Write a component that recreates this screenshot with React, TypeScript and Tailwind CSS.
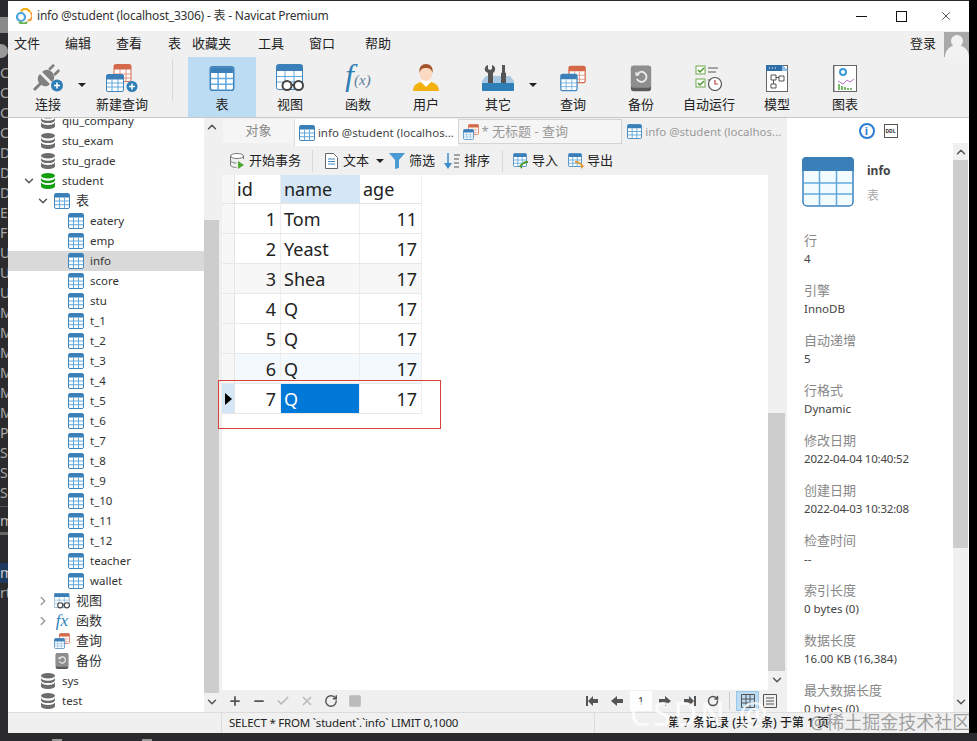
import { ChevronDown, ChevronRight, ChevronUp, Minus, Plus, X, Check, RotateCw, Square } from 'lucide-react';

// Small table glyph used all over the tree and tabs
function TableIcon({ className = 'w-4 h-4' }: { className?: string }) {
  return (
    <svg className={`${className} shrink-0`} viewBox="0 0 16 16">
      <rect x="0.5" y="0.5" width="15" height="15" rx="1.5" fill="#fff" stroke="#3f84bd" />
      <path d="M1 1.5A1 1 0 012 .8h12a1 1 0 011 .7V4.5H1z" fill="#3b7fb8" />
      <path d="M5.5 4.5V15.5M10.5 4.5V15.5M1 8h14M1 11.7h14" stroke="#62a9dd" strokeWidth="1" />
    </svg>
  );
}

function DbIcon({ color = '#6d6d6d', className = 'w-[14px] h-4' }: { color?: string; className?: string }) {
  return (
    <svg className={`${className} shrink-0`} viewBox="0 0 14 16">
      <ellipse cx="7" cy="2.8" rx="7" ry="2.8" fill={color} />
      <path d="M0 5c1 2 3 2.7 7 2.7S13 7 14 5v2.4c-1 2-3 2.7-7 2.7S1 9.400 0 7.400z" fill={color} />
      <path d="M0 9.300c1 2 3 2.700 7 2.700s6-.7 7-2.700V13c0 1.800-3 3-7 3s-7-1.200-7-3z" fill={color} />
    </svg>
  );
}

function QueryIcon({ className = 'w-4 h-4' }: { className?: string }) {
  return (
    <svg className={`${className} shrink-0`} viewBox="0 0 32 32">
      <rect x="11" y="1" width="20" height="20" rx="2" fill="#fff" stroke="#d4694a" strokeWidth="1.500" />
      <path d="M11 2.500A2 2 0 0113 1h16a2 2 0 012 1.500V7H11z" fill="#d4694a" />
      <path d="M18 7v14M24 7v14M11 12h20M11 17h20" stroke="#e3917a" />
      <rect x="1" y="11" width="20" height="20" rx="2" fill="#fff" stroke="#3f84bd" strokeWidth="1.500" />
      <path d="M1 12.500A2 2 0 013 11h16a2 2 0 012 1.500V17H1z" fill="#3b7fb8" />
      <path d="M7.500 17v14M14.500 17v14M1 21.500h20M1 26h20" stroke="#62a9dd" />
    </svg>
  );
}

function BackupIcon({ className = 'w-4 h-4' }: { className?: string }) {
  return (
    <svg className={`${className} shrink-0`} viewBox="0 0 24 28">
      <rect x="1" y="0" width="22" height="28" rx="3" fill="#5c5c5c" />
      <rect x="1" y="0" width="22" height="24" rx="3" fill="#8e8e8e" />
      <path d="M8 9a5.500 5.500 0 11-.5 5.500" fill="none" stroke="#eee" strokeWidth="2" />
      <path d="M5.500 6.500l1 5 4.500-1.500z" fill="#eee" />
    </svg>
  );
}

function ViewIcon({ className = 'w-4 h-4' }: { className?: string }) {
  return (
    <svg className={`${className} shrink-0`} viewBox="0 0 28 28">
      <rect x="0.500" y="0.500" width="26" height="25" rx="2" fill="#fff" stroke="#3f84bd" />
      <path d="M.5 2.500a2 2 0 012-2h22a2 2 0 012 2V7H.5z" fill="#3b7fb8" />
      <path d="M9 7v19M18 7v19M1 12.500h25M1 18h25" stroke="#62a9dd" />
      <circle cx="11" cy="21.500" r="4.500" fill="#fff" stroke="#444" strokeWidth="2" />
      <circle cx="22.500" cy="21.500" r="4.500" fill="#fff" stroke="#444" strokeWidth="2" />
      <path d="M15 21h4" stroke="#444" strokeWidth="2" />
    </svg>
  );
}

function PlugIcon() {
  return (
    <svg className="w-[32px] h-[28px]" viewBox="0 0 32 28">
      <g transform="rotate(45 14 14)" fill="#808080">
        <rect x="12.500" y="21" width="3" height="10" />
        <path d="M7 15.500h14v1a7 6 0 01-14 0z" />
        <path d="M7 12.500h14v-1a7 6 0 00-14 0z" />
        <rect x="9" y="-1" width="2.600" height="7" />
        <rect x="16.400" y="-1" width="2.600" height="7" />
      </g>
      <circle cx="25" cy="21.500" r="6" fill="#2f7fb7" />
      <path d="M25 18.500v6M22 21.500h6" stroke="#fff" strokeWidth="1.600" />
    </svg>
  );
}

function NewQueryIcon() {
  return (
    <svg className="w-[32px] h-[28px]" viewBox="0 0 32 28">
      <rect x="8" y="0.500" width="17" height="17" rx="1.500" fill="#fff" stroke="#d4694a" />
      <path d="M8 2a1.500 1.500 0 011.500-1.500h14A1.500 1.500 0 0125 2v3.500H8z" fill="#d4694a" />
      <path d="M14 5v13M20 5v13M8 10h17M8 14h17" stroke="#e3917a" />
      <rect x="0.500" y="10.500" width="17" height="17" rx="1.500" fill="#fff" stroke="#3f84bd" />
      <path d="M.5 12a1.500 1.500 0 011.500-1.500h14a1.500 1.500 0 011.500 1.500v3.500H.5z" fill="#3b7fb8" />
      <path d="M6 15v12M12 15v12M1 19h16M1 23h16" stroke="#62a9dd" />
      <circle cx="26" cy="22.500" r="5.500" fill="#2f7fb7" />
      <path d="M26 19.500v6M23 22.500h6" stroke="#fff" strokeWidth="1.600" />
    </svg>
  );
}

function FxIcon() {
  return (
    <svg className="w-[30px] h-[28px]" viewBox="0 0 30 28">
      <text x="2" y="22" fontFamily="Liberation Serif" fontStyle="italic" fontSize="32" fill="#2f7fb7">f</text>
      <text x="11" y="21" fontFamily="Liberation Serif" fontStyle="italic" fontSize="15" fill="#5a7d9c">(x)</text>
    </svg>
  );
}

function UserIcon() {
  return (
    <svg className="w-[26px] h-[28px]" viewBox="0 0 26 28">
      <path d="M0 27c0-6 4-8 8-9l5 2 5-2c4 1 8 3 8 9z" fill="#f2b111" />
      <path d="M8 18l5 5 5-5-2-3h-6z" fill="#fff" />
      <ellipse cx="13" cy="9" rx="6.500" ry="8" fill="#fbd9c0" />
      <path d="M6.500 9C5.500 3 9 0 13 0s7.500 3 6.500 9c-1-4-3-5-6.500-5S7.500 5 6.500 9z" fill="#a5532a" />
    </svg>
  );
}

function ToolsIcon() {
  return (
    <svg className="w-[32px] h-[28px]" viewBox="0 0 32 28">
      <path d="M6 1v4l2 1 2-1V1c3 1 4 4 2.500 6.500L11 9v9H6V9L3.500 7.500C2 5 3 2 6 1z" fill="#555" />
      <path d="M20 1h3v7l1 2v8h-5v-8l1-2z" fill="#555" />
      <path d="M0 17l4-5h24l4 5v9a1 1 0 01-1 1H1a1 1 0 01-1-1z" fill="#a8c8e4" />
      <path d="M0 19h32v7a1 1 0 01-1 1H1a1 1 0 01-1-1z" fill="#2f7fb7" />
      <path d="M6 9h5v10H6zM19 9h5v10h-5z" fill="#555" />
    </svg>
  );
}

function AutoRunIcon() {
  return (
    <svg className="w-[28px] h-[26px]" viewBox="0 0 28 26">
      <rect x="1" y="1" width="9" height="8" fill="#fff" stroke="#71a84d" />
      <path d="M3 5l2 2 4-4" fill="none" stroke="#4e9a2e" strokeWidth="1.500" />
      <rect x="1" y="14" width="9" height="8" fill="#fff" stroke="#71a84d" />
      <path d="M3 18l2 2 4-4" fill="none" stroke="#4e9a2e" strokeWidth="1.500" />
      <path d="M13 3h10M13 7h8M13 15h3" stroke="#8a8a8a" strokeWidth="1.500" />
      <circle cx="20" cy="19" r="6.500" fill="#fff" stroke="#555" strokeWidth="1.200" />
      <path d="M20 15v4h3" fill="none" stroke="#c0453c" strokeWidth="1.200" />
    </svg>
  );
}

function ModelIcon() {
  return (
    <svg className="w-[22px] h-[27px]" viewBox="0 0 22 27">
      <rect x="0.500" y="0.500" width="21" height="26" fill="#fff" stroke="#666" />
      <path d="M0 0h16l6 6H0z" fill="#2f6ea6" />
      <path d="M16 0l6 6h-6z" fill="#8fc0e6" />
      <path d="M3 3h1M6 3h1M9 3h1" stroke="#fff" />
      <path d="M5 10h5v5H5zM13 11h5v5h-5zM5 19h5v4H5z" fill="none" stroke="#555" />
      <path d="M10 12.500h3M7.500 15v4" stroke="#555" />
    </svg>
  );
}

function ChartIcon() {
  return (
    <svg className="w-[24px] h-[27px]" viewBox="0 0 24 27">
      <rect x="0.500" y="0.500" width="23" height="26" fill="#fff" stroke="#666" />
      <path d="M1.500 1v25" stroke="#bbb" />
      <circle cx="10" cy="7" r="3" fill="none" stroke="#3a9ad9" strokeWidth="2" />
      <path d="M5 16l5 3 4-4 3 2 4-3" fill="none" stroke="#b971c9" />
      <path d="M6 25v-6M9 25v-4M12 25v-3M15 25v-2M18 25v-2" stroke="#4fa53a" strokeWidth="1.500" />
    </svg>
  );
}

function Caret() {
  return <div className="w-0 h-0 border-x-[4px] border-x-transparent border-t-[4px] border-t-[#222]" />;
}

const cjk = "font-['Noto_Sans','Noto_Sans_CJK_SC',sans-serif]";

const menus = [
  { t: '文件', c: 'ml-0' },
  { t: '编辑', c: 'ml-[25px]' },
  { t: '查看', c: 'ml-[25px]' },
  { t: '表', c: 'ml-[26px]' },
  { t: '收藏夹', c: 'ml-[11px]' },
  { t: '工具', c: 'ml-[27px]' },
  { t: '窗口', c: 'ml-[25px]' },
  { t: '帮助', c: 'ml-[30px]' },
];

function ToolItem({ label, active, w = 'w-[68px]', children }: { label: string; active?: boolean; w?: string; children: React.ReactNode }) {
  return (
    <div className={`${w} h-full flex flex-col items-center shrink-0 ${active ? 'bg-[#bcdcf4]' : ''}`}>
      <div className="h-[28px] mt-[7px] flex items-center justify-center">{children}</div>
      <div className="mt-[3px] text-[13px] leading-[18px] text-[#222]">{label}</div>
    </div>
  );
}

const tables = ['eatery', 'emp', 'info', 'score', 'stu', 't_1', 't_2', 't_3', 't_4', 't_5', 't_6', 't_7', 't_8', 't_9', 't_10', 't_11', 't_12', 'teacher', 'wallet'];

function DbRow({ name, color, open }: { name: string; color?: string; open?: boolean }) {
  return (
    <div className="h-5 flex items-center pl-[33px] text-[11.5px] text-[#333] relative">
      {open && <ChevronDown className="w-[14px] h-[14px] absolute left-[14px] text-[#555]" strokeWidth={2.500} />}
      <DbIcon color={color} />
      <span className="ml-[7px]">{name}</span>
    </div>
  );
}

function GroupRow({ name, chevron, children }: { name: string; chevron?: 'open' | 'closed'; children: React.ReactNode }) {
  return (
    <div className="h-5 flex items-center pl-[46px] text-xs text-[#333] relative">
      {chevron === 'open' && <ChevronDown className="w-[14px] h-[14px] absolute left-[28px] text-[#555]" strokeWidth={2.500} />}
      {chevron === 'closed' && <ChevronRight className="w-[14px] h-[14px] absolute left-[28px] text-[#999]" strokeWidth={2.500} />}
      <div className="w-4 h-4 flex items-center justify-center">{children}</div>
      <span className="ml-[6px] text-[13px]">{name}</span>
    </div>
  );
}

function Tree() {
  return (
    <div className="w-[196px] shrink-0 bg-white overflow-hidden">
      <div className="-mt-[7px]">
        <DbRow name="qiu_company" />
        <DbRow name="stu_exam" />
        <DbRow name="stu_grade" />
        <DbRow name="student" color="#12a012" open />
        <GroupRow name="表" chevron="open"><TableIcon /></GroupRow>
        {tables.map((t) => (
          <div key={t} className={`h-5 flex items-center pl-[60px] text-[11.5px] text-[#333] ${t === 'info' ? 'bg-[#d9d9d9]' : ''}`}>
            <TableIcon />
            <span className="ml-[6px]">{t}</span>
          </div>
        ))}
        <GroupRow name="视图" chevron="closed"><ViewIcon /></GroupRow>
        <GroupRow name="函数" chevron="closed">
          <span className="font-['Liberation_Serif',serif] italic text-[17px] leading-4 text-[#2f7fb7]">fx</span>
        </GroupRow>
        <GroupRow name="查询"><QueryIcon /></GroupRow>
        <GroupRow name="备份"><BackupIcon className="w-[14px] h-4" /></GroupRow>
        <DbRow name="sys" />
        <DbRow name="test" />
      </div>
    </div>
  );
}

function ScrollBar({ topGap, thumb, className }: { topGap: string; thumb: string; className: string }) {
  return (
    <div className={`flex flex-col items-center bg-[#f0f0f0] shrink-0 ${className}`}>
      <div className={`${topGap} w-full flex items-center justify-center`}>
        <ChevronUp className="w-[14px] h-[14px] text-[#555]" strokeWidth={2.500} />
      </div>
      <div className={`${thumb} w-full bg-[#cdcdcd]`} />
      <div className="flex-1" />
      <ChevronDown className="w-[14px] h-[14px] text-[#555] mb-[3px]" strokeWidth={2.500} />
    </div>
  );
}

const rows = [
  { id: 1, name: 'Tom', age: 11, bg: 'bg-white' },
  { id: 2, name: 'Yeast', age: 17, bg: 'bg-white' },
  { id: 3, name: 'Shea', age: 17, bg: 'bg-[#f7f7f7]' },
  { id: 4, name: 'Q', age: 17, bg: 'bg-white' },
  { id: 5, name: 'Q', age: 17, bg: 'bg-white' },
  { id: 6, name: 'Q', age: 17, bg: 'bg-[#f3f9fd]' },
  { id: 7, name: 'Q', age: 17, bg: 'bg-white' },
];

function DataGrid() {
  return (
    <div className="relative flex-1 bg-white">
      <div className="w-[200px] text-[18px] leading-[30px] text-[#222]">
        <div className="flex h-[29px] leading-[28px] border-b border-[#e4e4e4]">
          <div className="w-[13px] bg-[#f7f7f7] border-r border-[#e4e4e4]" />
          <div className="w-[46px] pl-[2px] border-r border-[#eee]">id</div>
          <div className="w-[79px] pl-[3px] bg-[#d5e7f7]">name</div>
          <div className="w-[62px] pl-[3px] border-r border-[#eee]">age</div>
        </div>
        {rows.map((r) => (
          <div key={r.id} className={`flex h-[30px] border-b border-[#e8e8e8] ${r.bg}`}>
            <div className={`w-[13px] border-r border-[#e4e4e4] flex items-center justify-center ${r.id === 7 ? 'bg-[#d5e7f7]' : 'bg-[#f7f7f7]'}`}>
              {r.id === 7 && <div className="w-0 h-0 border-y-[6px] border-y-transparent border-l-[7px] border-l-black" />}
            </div>
            <div className="w-[46px] pr-[4px] text-right border-r border-[#eee]">{r.id}</div>
            <div className={`w-[79px] pl-[3px] border-r border-[#eee] ${r.id === 7 ? 'bg-[#0078d7] text-white' : ''}`}>{r.name}</div>
            <div className="w-[62px] pr-[4px] text-right border-r border-[#eee]">{r.age}</div>
          </div>
        ))}
      </div>
      <div className="absolute left-[-4px] top-[205px] w-[223px] h-[49px] border border-[#d9413b]" />
    </div>
  );
}

function SmallTool({ label, children, caret }: { label: string; children: React.ReactNode; caret?: boolean }) {
  return (
    <div className="flex items-center shrink-0">
      <div className="w-4 h-4 flex items-center justify-center">{children}</div>
      <span className="ml-[4px] text-[13px] text-[#222]">{label}</span>
      {caret && <div className="ml-[7px]"><Caret /></div>}
    </div>
  );
}

function ArrowBadge({ color, flip }: { color: string; flip?: boolean }) {
  return (
    <div className="relative w-[15px] h-[15px]">
      <TableIcon className="w-[14px] h-[14px]" />
      <svg className="absolute -right-[1px] -bottom-[1px] w-[10px] h-[9px]" viewBox="0 0 10 9">
        <path d={flip ? 'M1 1c4 0 6 1 6 4V3l3 3-3 3V7C7 4 4 3 1 3z' : 'M9 1C5 1 3 2 3 5V3L0 6l3 3V7c0-3 3-4 6-4z'} fill={color} />
      </svg>
    </div>
  );
}

function ObjectToolbar() {
  return (
    <div className="h-[29px] flex items-center shrink-0 pl-[7px]">
      <SmallTool label="开始事务">
        <svg className="w-[15px] h-[16px]" viewBox="0 0 15 16">
          <ellipse cx="7" cy="3" rx="6.500" ry="2.500" fill="#fff" stroke="#777" />
          <path d="M.5 3v9c0 1.400 3 2.500 6 2.500M13.500 3v3M.5 7.500c0 1.400 3 2.500 6 2.500" fill="none" stroke="#777" />
          <path d="M8 8l6 4-6 4z" fill="#4ea72e" />
        </svg>
      </SmallTool>
      <div className="w-px h-[22px] bg-[#d8d8d8] ml-[11px] mr-[10px]" />
      <SmallTool label="文本" caret>
        <svg className="w-[13px] h-[16px]" viewBox="0 0 13 16">
          <path d="M.5.5h8l4 4v11H.5z" fill="#fff" stroke="#666" />
          <path d="M3 6h7M3 8.500h7M3 11h7" stroke="#3f84bd" />
        </svg>
      </SmallTool>
      <div className="w-[5px]" />
      <SmallTool label="筛选">
        <svg className="w-4 h-4" viewBox="0 0 16 16"><path d="M0 0h16L10 7v8l-4 1V7z" fill="#4a9ad4" /></svg>
      </SmallTool>
      <div className="w-[9px]" />
      <SmallTool label="排序">
        <svg className="w-4 h-4" viewBox="0 0 16 16">
          <path d="M4 0v13" stroke="#3d8fd1" strokeWidth="1.500" />
          <path d="M0 10l4 6 4-6z" fill="#3d8fd1" />
          <path d="M10 2h6M10 6h5M10 10h5M10 14h5" stroke="#555" />
        </svg>
      </SmallTool>
      <div className="w-px h-[22px] bg-[#d8d8d8] ml-[12px] mr-[9px]" />
      <SmallTool label="导入"><ArrowBadge color="#4e9a2e" /></SmallTool>
      <div className="w-[9px]" />
      <SmallTool label="导出"><ArrowBadge color="#e8962e" flip /></SmallTool>
    </div>
  );
}

function Tabs() {
  return (
    <div className="h-[28px] flex items-stretch shrink-0 text-[13px] pt-px">
      <div className="w-[71px] mb-[3px] ml-px bg-[#f5f5f5] text-[#888] flex items-center justify-center">对象</div>
      <div className="w-[164px] bg-white flex items-center pl-[4px] text-[#444] border-l border-[#ddd]">
        <TableIcon />
        <span className="ml-[3px] text-[11.5px] whitespace-nowrap">info @student (localhos...</span>
      </div>
      <div className="w-[165px] mb-[2px] bg-[#f5f5f5] border border-[#d4d4d4] flex items-center pl-[4px] text-[#999]">
        <QueryIcon />
        <span className="ml-[3px] whitespace-nowrap">* 无标题 - 查询</span>
      </div>
      <div className="w-[165px] mb-[2px] flex items-center pl-[5px] text-[#999]">
        <TableIcon className="w-[15px] h-[15px]" />
        <span className="ml-[3px] text-[11.5px] whitespace-nowrap">info @student (localhos...</span>
      </div>
    </div>
  );
}

function PagerArrow({ d }: { d: string }) {
  return (
    <svg className="w-3 h-3" viewBox="0 0 12 12"><path d={d} fill="#555" /></svg>
  );
}

function GridFooter() {
  const muted = 'w-[14px] h-[14px] text-[#bbb]';
  return (
    <div className="h-[22px] flex items-center shrink-0 text-[#555]">
      <div className="flex items-center gap-[10px] pl-[6px]">
        <Plus className="w-[14px] h-[14px]" strokeWidth={3} />
        <Minus className="w-[14px] h-[14px]" strokeWidth={3} />
        <Check className={muted} strokeWidth={3} />
        <X className={muted} strokeWidth={3} />
        <RotateCw className="w-[14px] h-[14px]" strokeWidth={2.500} />
        <Square className="w-[14px] h-[14px] text-[#bbb] fill-[#bbb]" />
      </div>
      <div className="flex-1" />
      <div className="flex items-center">
        <PagerArrow d="M0 1h2v10H0zM2 6l5-5v3h5v4H7v3z" />
        <div className="w-[13px]" />
        <PagerArrow d="M0 6l6-5v3h6v4H6v3z" />
        <div className="w-[7px]" />
        <div className="w-[22px] h-[20px] bg-white text-[11px] text-center leading-5 text-[#444]">1</div>
        <div className="w-[7px]" />
        <PagerArrow d="M12 6L6 1v3H0v4h6v3z" />
        <div className="w-[13px]" />
        <PagerArrow d="M12 1h-2v10h2zM10 6L5 1v3H0v4h5v3z" />
        <div className="w-[11px]" />
        <RotateCw className="w-3 h-3" strokeWidth={3} />
        <div className="w-px h-[18px] bg-[#ccc] ml-[10px] mr-[6px]" />
        <div className="w-[23px] h-[20px] bg-[#bcdcf4] border border-[#9cc7e8] flex items-center justify-center">
          <svg className="w-[14px] h-[14px]" viewBox="0 0 14 14"><path d="M.5.5h13v13H.5zM.5 5h13M.5 9h13M5 .5v13M9 .5v13" fill="none" stroke="#555" /></svg>
        </div>
        <div className="w-[4px]" />
        <svg className="w-[14px] h-[14px] mr-[10px]" viewBox="0 0 14 14"><path d="M.5.5h13v13H.5zM3 4h8M3 7h8M3 10h8" fill="none" stroke="#555" /></svg>
      </div>
    </div>
  );
}

const props = [
  ['行', '4'],
  ['引擎', 'InnoDB'],
  ['自动递增', '5'],
  ['行格式', 'Dynamic'],
  ['修改日期', '2022-04-04 10:40:52'],
  ['创建日期', '2022-04-03 10:32:08'],
  ['检查时间', '--'],
  ['索引长度', '0 bytes (0)'],
  ['数据长度', '16.00 KB (16,384)'],
  ['最大数据长度', '0 bytes (0)'],
];

function InfoPanel() {
  return (
    <div className="w-[182px] shrink-0 bg-white flex flex-col min-h-0">
      <div className="h-[25px] flex items-center justify-center gap-[9px] shrink-0">
        <div className="w-4 h-4 rounded-full border-2 border-[#2b7cd3] text-[#2b7cd3] text-[11px] leading-[12px] font-bold text-center">i</div>
        <div className="w-[14px] h-[14px] border border-[#555] text-[5px] leading-[12px] font-bold text-center text-[#333]">DDL</div>
      </div>
      <div className="flex flex-1 min-h-0">
        <div className="w-[166px] overflow-hidden pl-[15px] pt-[14px]">
          <div className="flex">
            <svg className="w-[52px] h-[50px] shrink-0" viewBox="0 0 52 50">
              <rect x="1" y="1" width="50" height="48" rx="4" fill="#f2fbff" stroke="#3f84bd" strokeWidth="1.500" />
              <path d="M0 4a4 4 0 014-4h44a4 4 0 014 4v10H0z" fill="#3b7fb8" />
              <path d="M17.500 14v35M34.500 14v35M1 26h50M1 37h50" stroke="#62a9dd" strokeWidth="1.500" />
            </svg>
            <div className="ml-[13px]">
              <div className="text-xs font-bold text-[#444] leading-[16px] mt-[6px]">info</div>
              <div className="text-xs text-[#aaa] leading-[16px] mt-[9px]">表</div>
            </div>
          </div>
          <div className="mt-[24px] pl-[2px]">
            {props.map(([k, v], i) => (
              <div key={i} className="h-[50px]">
                <div className="text-[13px] leading-[18px] text-[#888]">{k}</div>
                <div className={`mt-px text-[11.5px] leading-[18px] text-[#444] ${v.startsWith('2022') ? 'tracking-[-0.2px]' : ''}`}>{v}</div>
              </div>
            ))}
          </div>
        </div>
        <ScrollBar topGap="h-[17px]" thumb="h-[388px]" className="w-[15px]" />
      </div>
    </div>
  );
}

// The window behind: clipped letters of another app showing at the left edge
const behind = ['C', 'C', 'C', 'C', 'D', 'D', 'D', 'E', 'F', 'U', 'U', 'U', 'M', 'M', 'M', 'M', 'M', 'M', 'P', 'S', 'S', 'S'];

function BehindStrip() {
  return (
    <div className="w-2 shrink-0 overflow-hidden pt-[17px] text-[14px] leading-5 text-[#a9a9a9]">
      <div className="h-4 bg-[#8a8a8a]" />
      <div className="mt-[11px] w-[14px] h-[14px] -ml-[6px] rounded-full bg-[#999]" />
      <div className="h-[5px]" />
      {behind.map((c, i) => (
        <div key={i} className="h-5">{c}</div>
      ))}
      <div className="h-px bg-[#555] mt-[3px]" />
      <div className="mt-[4px] h-5 text-[#bbb]">m</div>
      <div className="h-[3px] bg-[#666] mt-[1px]" />
      <div className="mt-[28px] h-5 bg-[#1e3a5f] text-[#ccc]">m</div>
      <div className="h-5">rt</div>
    </div>
  );
}

export default function App() {
  return (
    <div className={`relative w-[977px] h-[741px] overflow-hidden bg-[#2b2b2d] ${cjk}`}>
      <div className="flex h-[733px]">
        <BehindStrip />
        <div className="w-[961px] mt-px flex flex-col bg-[#f0f0f0] shrink-0">
          {/* Title bar */}
          <div className="h-[30px] bg-white flex items-center shrink-0 pl-[8px]">
            <svg className="w-4 h-4" viewBox="0 0 16 16">
              <circle cx="5" cy="9" r="4" fill="none" stroke="#4aa3df" strokeWidth="2.200" />
              <path d="M5 3.500a5 5 0 019 .5" fill="none" stroke="#f2b111" strokeWidth="2.200" />
              <path d="M14.500 4.500a4.500 4.500 0 01-3 8" fill="none" stroke="#f2a03a" strokeWidth="2.200" />
              <path d="M3 14c3 2 6 2 8 0" fill="none" stroke="#6ab04c" strokeWidth="2.200" />
            </svg>
            <div className="ml-[5px] text-xs tracking-[-0.2px] text-[#333]">info @student (localhost_3306) - 表 - Navicat Premium</div>
            <div className="flex-1" />
            <div className="w-[11px] h-px bg-[#111] mr-[29px]" />
            <div className="w-[11px] h-[11px] border border-[#111] mr-[32px]" />
            <X className="w-[14px] h-[14px] mr-[16px] text-[#111]" strokeWidth={1.200} />
          </div>
          {/* Menu */}
          <div className="h-[26px] flex items-center shrink-0 pl-[6px] text-[13px] text-[#222] relative">
            {menus.map((m) => (
              <span key={m.t} className={m.c}>{m.t}</span>
            ))}
            <div className="flex-1" />
            <span className="mr-[8px]">登录</span>
            <div className="w-[25px] h-[25px] bg-[#a9a9a9] overflow-hidden flex flex-col items-center">
              <div className="w-[12px] h-[14px] rounded-full bg-[#f2f2f2] mt-[3px]" />
              <div className="w-[24px] h-[12px] rounded-t-full bg-[#f2f2f2] -mt-[2px]" />
            </div>
          </div>
          {/* Big toolbar */}
          <div className="h-[61px] flex items-stretch shrink-0 border-b border-[#c8c8c8] pl-[6px]">
            <ToolItem label="连接"><PlugIcon /></ToolItem>
            <div className="w-[6px] relative"><div className="absolute -left-[4px] top-[26px]"><Caret /></div></div>
            <ToolItem label="新建查询"><NewQueryIcon /></ToolItem>
            <div className="w-px h-[42px] bg-[#d8d8d8] mt-[2px] ml-[16px] mr-[15px]" />
            <ToolItem label="表" active><TableIcon className="w-[26px] h-[25px]" /></ToolItem>
            <ToolItem label="视图"><ViewIcon className="w-[28px] h-[28px]" /></ToolItem>
            <ToolItem label="函数"><FxIcon /></ToolItem>
            <ToolItem label="用户"><UserIcon /></ToolItem>
            <ToolItem label="其它" w="w-[76px]"><ToolsIcon /></ToolItem>
            <div className="w-[3px] relative"><div className="absolute -left-[7px] top-[26px]"><Caret /></div></div>
            <ToolItem label="查询"><QueryIcon className="w-[26px] h-[27px]" /></ToolItem>
            <ToolItem label="备份"><BackupIcon className="w-[22px] h-[27px]" /></ToolItem>
            <ToolItem label="自动运行"><AutoRunIcon /></ToolItem>
            <ToolItem label="模型"><ModelIcon /></ToolItem>
            <ToolItem label="图表"><ChartIcon /></ToolItem>
          </div>
          {/* Body */}
          <div className="flex-1 flex min-h-0">
            <Tree />
            <ScrollBar topGap="h-[102px] items-start pt-[2px]" thumb="h-[473px]" className="w-[15px]" />
            <div className="w-[568px] shrink-0 flex flex-col pl-[3px]">
              <Tabs />
              <ObjectToolbar />
              <div className="flex-1 flex min-h-0">
                <DataGrid />
                <ScrollBar topGap="h-[238px] items-start opacity-0" thumb="h-[258px]" className="w-[19px] pr-[2px]" />
              </div>
              <GridFooter />
            </div>
            <InfoPanel />
          </div>
          {/* Status */}
          <div className="h-[21px] border-t border-[#dcdcdc] flex items-center shrink-0 text-[11.5px] text-[#222]">
            <div className="w-[214px] h-full border-r border-[#dcdcdc]" />
            <div className="w-[373px] h-full border-r border-[#dcdcdc] pl-[7px] leading-[20px] tracking-[-0.2px]">SELECT * FROM `student`.`info` LIMIT 0,1000</div>
            <div className="pl-[73px] text-xs font-medium whitespace-nowrap">第 7 条记录 (共 7 条) 于第 1 页</div>
          </div>
        </div>
        <div className="w-2 bg-black shrink-0" />
      </div>
      {/* Bottom strip of the window behind */}
      <div className="h-2 overflow-hidden flex items-start pt-[6px] text-[11px] leading-3 text-[#aaa]">
        <div className="ml-[52px] w-[10px] h-[10px] bg-[#999]" />
        <span className="ml-[5px]">Terminal</span>
        <div className="ml-[30px] w-[10px] h-[10px] bg-[#999]" />
        <span className="ml-[5px]">Build</span>
        <span className="ml-[690px]">Services</span>
      </div>
      {/* Watermarks over the status bar */}
      <div className="absolute left-[630px] top-[694px] text-[32px] leading-[40px] tracking-[3px] text-white/80 whitespace-nowrap pointer-events-none">CSDN @</div>
      <div className="absolute left-[810px] top-[711px] text-[18px] leading-[22px] text-[#8a8a8a]/80 whitespace-nowrap pointer-events-none">@稀土掘金技术社区</div>
    </div>
  );
}
